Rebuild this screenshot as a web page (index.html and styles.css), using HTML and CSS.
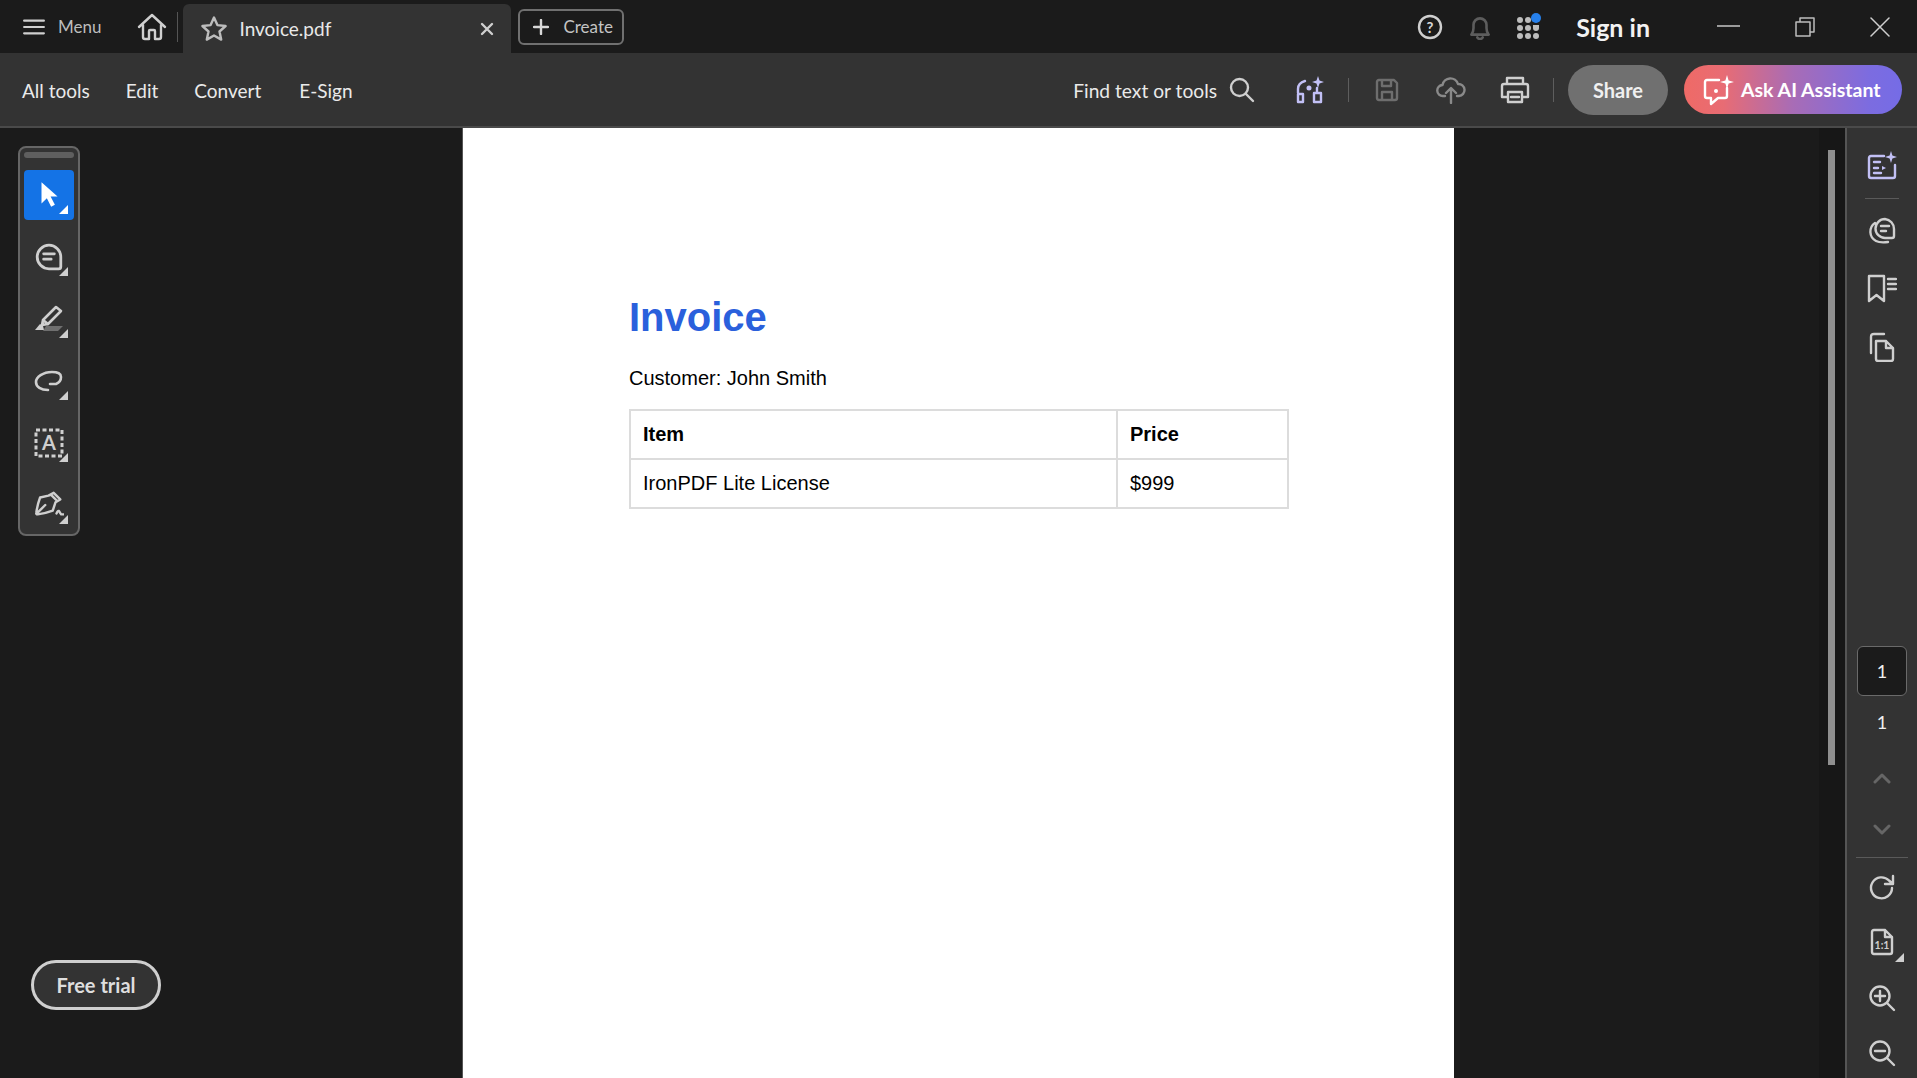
FILE: index.html
```html
<!DOCTYPE html>
<html lang="en">
<head>
<meta charset="utf-8">
<title>Invoice.pdf</title>
<link rel="stylesheet" href="styles.css">
</head>
<body>
<header class="titlebar">
  <button class="menu-btn">
    <svg class="ico-menu" viewBox="0 0 24 20"><path d="M1 3h22M1 10h22M1 17h22"/></svg>
    <span>Menu</span>
  </button>
  <svg class="ico-home" viewBox="0 0 30 30"><path d="M2 15 15 3l13 12M6 12.500V25q0 2 2 2h4v-8q0-1 1-1h4q1 0 1 1v8h4q2 0 2-2V12.500"/></svg>
  <span class="tb-sep"></span>
  <div class="tab">
    <svg class="ico-star" viewBox="0 0 28 28"><path d="M14 2.500l3.400 7.600 8.200.900-6.100 5.500 1.700 8.100-7.200-4.100-7.200 4.100 1.700-8.100L2.400 11l8.200-.900z"/></svg>
    <span class="tab-name">Invoice.pdf</span>
    <svg class="ico-x" viewBox="0 0 14 14"><path d="M2 2l10 10M12 2 2 12"/></svg>
  </div>
  <button class="create-btn">
    <svg class="ico-plus" viewBox="0 0 16 16"><path d="M8 1v14M1 8h14"/></svg>
    <span>Create</span>
  </button>
  <div class="spacer"></div>
  <svg class="ico-help" viewBox="0 0 26 26"><circle cx="13" cy="13" r="11"/><text x="13" y="18.500" text-anchor="middle" class="help-mark">?</text></svg>
  <svg class="ico-bell" viewBox="1 0 24 24"><path d="M5 19q2-2 2-6V10a6 6 0 0 1 12 0v3q0 4 2 6zM10.500 21.500a2.800 2.800 0 0 0 5 0"/></svg>
  <svg class="ico-apps" viewBox="0 0 28 28"><g><circle cx="5" cy="7" r="3"/><rect x="10" y="4" width="6" height="6" rx="3"/><circle cx="5" cy="15" r="3"/><circle cx="13" cy="15" r="3"/><path d="M18 12h6v3a3 3 0 0 1-6 0z"/><circle cx="5" cy="23" r="3"/><circle cx="13" cy="23" r="3"/><circle cx="21" cy="23" r="3"/></g><circle class="apps-dot" cx="21" cy="5" r="5"/></svg>
  <span class="signin">Sign in</span>
  <svg class="ico-min" viewBox="0 0 24 4"><path d="M0 2h24"/></svg>
  <svg class="ico-restore" viewBox="0 0 20 20"><path d="M1 5h14v14H1zM5 5V1h14v14h-4"/></svg>
  <svg class="ico-close" viewBox="0 0 20 20"><path d="M1 1l18 18M19 1 1 19"/></svg>
</header>

<nav class="toolbar">
  <a class="nav-item nav-all">All tools</a>
  <a class="nav-item nav-edit">Edit</a>
  <a class="nav-item nav-convert">Convert</a>
  <a class="nav-item nav-sign">E-Sign</a>
  <div class="spacer"></div>
  <span class="find">Find text or tools</span>
  <svg class="ico-search" viewBox="0 0 26 26"><circle cx="10.500" cy="10.500" r="8.500"/><path d="M16.500 16.500 24 24"/></svg>
  <svg class="ico-tools" viewBox="0 0 30 30"><g class="lilac"><path d="M3 18V14q0-6 7-8M3 19h5v8H3zM19 18h7v9h-7zM22 13v5"/><circle cx="14" cy="13" r="1.300"/><path class="lilac-fill" d="M23 1l1.500 4.500L29 7l-4.500 1.500L23 13l-1.500-4.500L17 7l4.500-1.500z"/></g></svg>
  <span class="tool-sep sep-a"></span>
  <svg class="ico-save" viewBox="0 0 26 26"><path d="M3 5q0-2 2-2h15l3 3v15q0 2-2 2H5q-2 0-2-2zM8 3v6h9V3M8 23v-8h10v8"/></svg>
  <svg class="ico-upload" viewBox="0 0 30 28"><path d="M9 20H7a5.500 5.500 0 0 1-.500-11A8 8 0 0 1 22 8a6 6 0 0 1 1 12h-2M15 27V13M10 17l5-5 5 5"/></svg>
  <svg class="ico-print" viewBox="0 0 30 28"><path d="M7 8V2h16v6M7 21H2V10q0-2 2-2h22q2 0 2 2v11h-5M8 16h14v10H8zM11 21h8"/></svg>
  <span class="tool-sep sep-b"></span>
  <button class="share">Share</button>
  <button class="ask">
    <svg class="ico-ask" viewBox="0 0 32 32"><path d="M17 6H5q-2 0-2 2v14q0 2 2 2h4v6l7-6h7q2 0 2-2v-8"/><circle cx="14" cy="17" r="2" class="white-fill"/><path class="white-fill" d="M25 1l1.600 5.400L32 8l-5.400 1.600L25 15l-1.600-5.400L18 8l5.400-1.600z"/></svg>
    <span>Ask AI Assistant</span>
  </button>
</nav>

<main class="workspace">
  <section class="viewer">
    <aside class="quick-tools">
      <div class="grip"></div>
      <div class="qt active">
        <svg viewBox="0 0 24 28"><path class="solid" d="M5 2v20l5-5 4 8 3.500-2-4-7.500H20z"/></svg>
      </div>
      <div class="qt">
        <svg viewBox="0 0 28 28"><path d="M14 3a11 11 0 1 0 0 22h9q2 0 2-2v-9A11 11 0 0 0 14 3zM9 11h10M9 16h7"/></svg>
      </div>
      <div class="qt">
        <svg viewBox="0 0 30 30"><path d="M9 16 22 3l5 4-13 13-6 1zM9 16l5 4"/><path class="solid" d="M1 26l5-6 3 2 1 4z"/><path class="dim" d="M12 22h17l-5 5H9z"/></svg>
      </div>
      <div class="qt">
        <svg viewBox="0 0 30 24"><path d="M16 15h6q5-2 5-7 0-5-9-5C9 3 2 8 2 13c0 5 5 8 12 8"/></svg>
      </div>
      <div class="qt">
        <svg viewBox="0 0 30 30"><rect class="dash" x="2" y="2" width="26" height="26"/><text x="15" y="22" text-anchor="middle" class="sel-a">A</text></svg>
      </div>
      <div class="qt">
        <svg viewBox="0 0 32 30"><path d="M21 2l7 7-5 3-3 9q-8 3-16 4-2 0-1.500-2 1-8 4-16l9-2zM3 24l9-9M18 4l7 7"/><path d="M24 24q2-4 3-2t2 3h3"/></svg>
      </div>
    </aside>

    <article class="page">
      <h1 class="doc-title">Invoice</h1>
      <p class="customer">Customer: John Smith</p>
      <table class="items">
        <tr><th class="col-item">Item</th><th>Price</th></tr>
        <tr><td>IronPDF Lite License</td><td>$999</td></tr>
      </table>
    </article>

    <button class="trial">Free trial</button>
  </section>

  <div class="scroll-track"><div class="scroll-thumb"></div></div>

  <aside class="rail">
    <div class="rail-btn rail-first">
      <svg class="lilac-svg" viewBox="0 0 30 30"><path d="M17 6H4q-2 0-2 2v18q0 2 2 2h22q2 0 2-2V15M7 12h6M7 18h4M7 23h7"/><path class="lilac-fill" d="M15 16l4 2-4 2z"/><path class="lilac-fill" d="M24 1l1.400 4.600L30 7l-4.600 1.400L24 13l-1.400-4.600L18 7l4.600-1.400z"/></svg>
    </div>
    <hr class="rail-div short">
    <div class="rail-btn">
      <svg viewBox="0 0 30 30"><path d="M18 3a9.500 9.500 0 1 0 0 19h7q2 0 2-2v-7A10 10 0 0 0 18 3zM14 10h8M14 15h5M8 7a10.500 10.500 0 0 0 1 18q4 2 12 1"/></svg>
    </div>
    <div class="rail-btn">
      <svg viewBox="0 0 30 30"><path d="M2 2h15v25l-7.500-6L2 27zM21 5h8M21 10h8M21 15h8"/></svg>
    </div>
    <div class="rail-btn">
      <svg viewBox="0 0 30 30"><path d="M9 9h10l7 7v11q0 2-2 2H11q-2 0-2-2zM19 9v7h7M4 21V5q0-3 3-3h10"/></svg>
    </div>

    <div class="rail-bottom">
      <div class="page-input">1</div>
      <div class="page-total">1</div>
      <div class="rail-chev"><svg viewBox="0 0 18 12"><path d="M2 10l7-7 7 7"/></svg></div>
      <div class="rail-chev"><svg viewBox="0 0 18 12"><path d="M2 2l7 7 7-7"/></svg></div>
      <hr class="rail-div wide">
      <div class="rail-tool"><svg viewBox="0 0 28 28"><path d="M24 14a10.500 10.500 0 1 1-3-7.500L25 10M25 2v8h-8"/></svg></div>
      <div class="rail-tool corner ratio-tool"><svg viewBox="0 0 28 28"><path d="M6 2h11l7 7v15q0 2-2 2H6q-2 0-2-2V4q0-2 2-2zM17 2v7h7"/><text x="14" y="20.500" text-anchor="middle" class="ratio">1:1</text></svg></div>
      <div class="rail-tool"><svg viewBox="0 0 28 28"><circle cx="12" cy="12" r="9.500"/><path d="M19 19l7 7M7 12h10M12 7v10"/></svg></div>
      <div class="rail-tool"><svg viewBox="0 0 28 28"><circle cx="12" cy="12" r="9.500"/><path d="M19 19l7 7M7 12h10"/></svg></div>
    </div>
  </aside>
</main>
</body>
</html>
```

FILE: styles.css
```css
* { box-sizing: border-box; }
html, body { margin: 0; height: 100%; overflow: hidden; }
body {
  display: flex;
  flex-direction: column;
  background: #1b1b1b;
  color: #e6e6e6;
  font-family: "Lato", "Noto Sans", sans-serif;
}
svg { display: block; fill: none; stroke: #cfcfcf; stroke-width: 2.400; stroke-linejoin: round; stroke-linecap: round; flex: none; }
button { font-family: inherit; padding: 0; border: 0; background: none; color: inherit; }
hr { border: 0; margin: 0; }
.spacer { flex: 1; }

/* title bar */
.titlebar { display: flex; align-items: center; height: 53px; flex: none; background: #1b1b1b; }
.menu-btn { display: flex; align-items: center; margin-left: 23px; font-size: 17px; color: #bdbdbd; }
.ico-menu { width: 22px; height: 18px; margin-right: 13px; stroke-width: 2.400; }
.ico-home { width: 30px; height: 30px; margin-left: 36px; }
.tb-sep { width: 1px; height: 30px; background: #555; margin-left: 10px; }
.tab { display: flex; align-items: center; align-self: flex-end; width: 328px; height: 49px; margin-left: 5px; background: #333; border-radius: 6px 6px 0 0; padding-left: 17px; }
.ico-star { width: 28px; height: 28px; stroke: #bdbdbd; }
.tab-name { font-size: 19px; margin-left: 11px; color: #e8e8e8; }
.ico-x { width: 14px; height: 14px; margin-left: auto; margin-right: 17px; stroke-width: 2.400; }
.create-btn { display: flex; align-items: center; width: 106px; height: 36px; margin-left: 7px; border: 2px solid #707070; border-radius: 6px; padding-left: 13px; font-size: 17px; color: #c4c4c4; }
.ico-plus { width: 16px; height: 16px; margin-right: 14px; stroke: #d8d8d8; }
.ico-help { width: 26px; height: 26px; }
.help-mark { font-family: "Lato", sans-serif; font-weight: 700; font-size: 15px; fill: #d8d8d8; stroke: none; }
.ico-bell { width: 26px; height: 26px; margin-left: 24px; stroke: #5d5d5d; }
.ico-apps { width: 28px; height: 28px; margin-left: 22px; stroke: none; fill: #bdbdbd; }
.apps-dot { fill: #2680eb; }
.signin { font-size: 25px; font-weight: 700; color: #f2f2f2; margin-left: 33px; }
.ico-min { width: 23px; height: 4px; margin-left: 67px; margin-top: -2px; stroke-width: 1.500; stroke-linecap: butt; }
.ico-restore { width: 20px; height: 20px; margin-left: 55px; stroke-width: 1.500; stroke: #bdbdbd; stroke-linecap: butt; }
.ico-close { width: 20px; height: 20px; margin-left: 55px; margin-right: 27px; stroke-width: 1.500; }

/* tool bar */
.toolbar { display: flex; align-items: center; height: 75px; flex: none; background: #333; border-bottom: 2px solid #4a4a4a; }
.nav-item { font-size: 19px; color: #eaeaea; margin-top: 1px; }
.nav-all { margin-left: 22px; }
.nav-edit { margin-left: 36px; }
.nav-convert { margin-left: 36px; }
.nav-sign { margin-left: 38px; }
.find { font-size: 19.200px; color: #eaeaea; margin-top: 1px; }
.ico-search { width: 26px; height: 26px; margin-left: 12px; }
.ico-tools { width: 30px; height: 30px; margin-left: 40px; }
.lilac { stroke: #c2c0f5; }
.lilac-fill { fill: #c2c0f5; stroke: none; }
.tool-sep { width: 1px; height: 24px; background: #5e5e5e; }
.sep-a { margin-left: 23px; }
.ico-save { width: 26px; height: 26px; margin-left: 25px; stroke: #6e6e6e; }
.ico-upload { width: 30px; height: 28px; margin-left: 36px; stroke: #8a8a8a; }
.ico-print { width: 30px; height: 28px; margin-left: 34px; }
.sep-b { margin-left: 23px; }
.share { width: 100px; height: 50px; margin-left: 14px; border-radius: 25px; background: #707070; font-size: 20px; font-weight: 700; color: #f0f0f0; }
.ask { display: flex; align-items: center; width: 218px; height: 49px; margin-left: 16px; margin-right: 15px; padding-left: 18px; border-radius: 25px; background: linear-gradient(90deg, #ef6a66 0%, #e86c74 18%, #a86cb6 50%, #7c6ce0 85%, #756ce6 100%); font-size: 19.500px; font-weight: 700; color: #fff; }
.ico-ask { width: 32px; height: 32px; margin-right: 7px; stroke: #fff; }
.white-fill { fill: #fff; stroke: none; }

/* workspace */
.workspace { flex: 1; display: flex; min-height: 0; }
.viewer { position: relative; flex: 1; display: flex; justify-content: center; background: #1b1b1b; overflow: hidden; padding-right: 0; }
.page { width: 992px; height: 100%; margin-left: 97px; background: #fff; padding: 166px 0 0 166px; color: #000; font-family: "Liberation Sans", Arial, sans-serif; border-left: 1px solid #555; }
.doc-title { margin: 0; font-size: 40px; line-height: 46px; font-weight: 700; color: #2a60dc; }
.customer { margin: 26px 0 0; font-size: 20px; line-height: 24px; }
.items { margin-top: 19px; width: 660px; border-collapse: collapse; font-size: 20px; }
.items th, .items td { border: 2px solid #dcdcdc; height: 49px; padding: 0 12px; text-align: left; }
.col-item { width: 487px; }

/* floating tools */
.quick-tools { position: absolute; left: 18px; top: 18px; width: 62px; height: 390px; background: #333; border: 2px solid #666; border-radius: 8px; padding: 4px; display: flex; flex-direction: column; align-items: center; }
.grip { width: 50px; height: 6px; border-radius: 3px; background: #5f5f5f; margin-bottom: 12px; flex: none; }
.qt { position: relative; width: 50px; height: 50px; margin-bottom: 12px; border-radius: 4px; display: flex; align-items: center; justify-content: center; flex: none; }
.qt svg { width: 30px; height: 30px; stroke-width: 2.600; }
.qt::after, .corner::after { content: ""; position: absolute; right: 6px; bottom: 6px; width: 9px; height: 9px; background: #cfcfcf; clip-path: polygon(100% 0, 100% 100%, 0 100%); }
.qt.active { background: #1473e6; }
.qt.active::after { background: #fff; }
.solid { fill: #fff; stroke: none; }
.qt .solid { fill: #cfcfcf; }
.qt.active .solid { fill: #fff; }
.dim { fill: #6f6f6f; stroke: none; }
.qt .dash { stroke-dasharray: 4 2.500; stroke-linecap: butt; stroke-width: 3; }
.sel-a { font-family: "Lato", sans-serif; font-size: 20px; font-weight: 700; fill: #cfcfcf; stroke: none; }
.trial { position: absolute; left: 31px; bottom: 68px; width: 130px; height: 50px; border: 3px solid #cfcfcf; border-radius: 25px; background: #333; font-size: 20px; font-weight: 700; color: #dedede; }

/* scroll */
.scroll-track { width: 26px; flex: none; background: #171717; padding: 22px 0 0 9px; }
.scroll-thumb { width: 7px; height: 615px; background: #8f8f8f; }

/* right rail */
.rail { width: 72px; flex: none; background: #333; border-left: 2px solid #555; display: flex; flex-direction: column; align-items: center; padding-top: 8px; }
.rail-btn { width: 100%; height: 58px; display: flex; align-items: center; justify-content: center; flex: none; }
.rail-btn svg { width: 30px; height: 30px; }
.lilac-svg { stroke: #c2c0f5; }
.rail-div { flex: none; height: 1px; background: #5a5a5a; }
.short { width: 34px; margin: 4px 0 3px; }
.wide { width: 52px; margin: 1px 0 2px; }
.rail-bottom { margin-top: 270px; display: flex; flex-direction: column; align-items: center; width: 100%; }
.page-input { width: 50px; height: 50px; border: 1px solid #6a6a6a; border-radius: 6px; background: #1b1b1b; display: flex; align-items: center; justify-content: center; font-size: 18px; color: #f0f0f0; }
.page-total { height: 52px; margin-bottom: 4px; display: flex; align-items: center; font-size: 18px; color: #f0f0f0; }
.rail-chev { height: 52px; width: 100%; display: flex; align-items: center; justify-content: center; }
.rail-chev svg { width: 18px; height: 12px; stroke: #666; stroke-width: 3; }
.rail-tool { position: relative; height: 55px; width: 100%; display: flex; align-items: center; justify-content: center; }
.rail-tool svg { width: 28px; height: 28px; }
.ratio-tool { margin-top: -1px; margin-bottom: 1px; }
.corner::after { right: 13px; bottom: 7px; }
.ratio { font-family: "Lato", sans-serif; font-size: 10.500px; font-weight: 700; fill: #cfcfcf; stroke: none; }
```
